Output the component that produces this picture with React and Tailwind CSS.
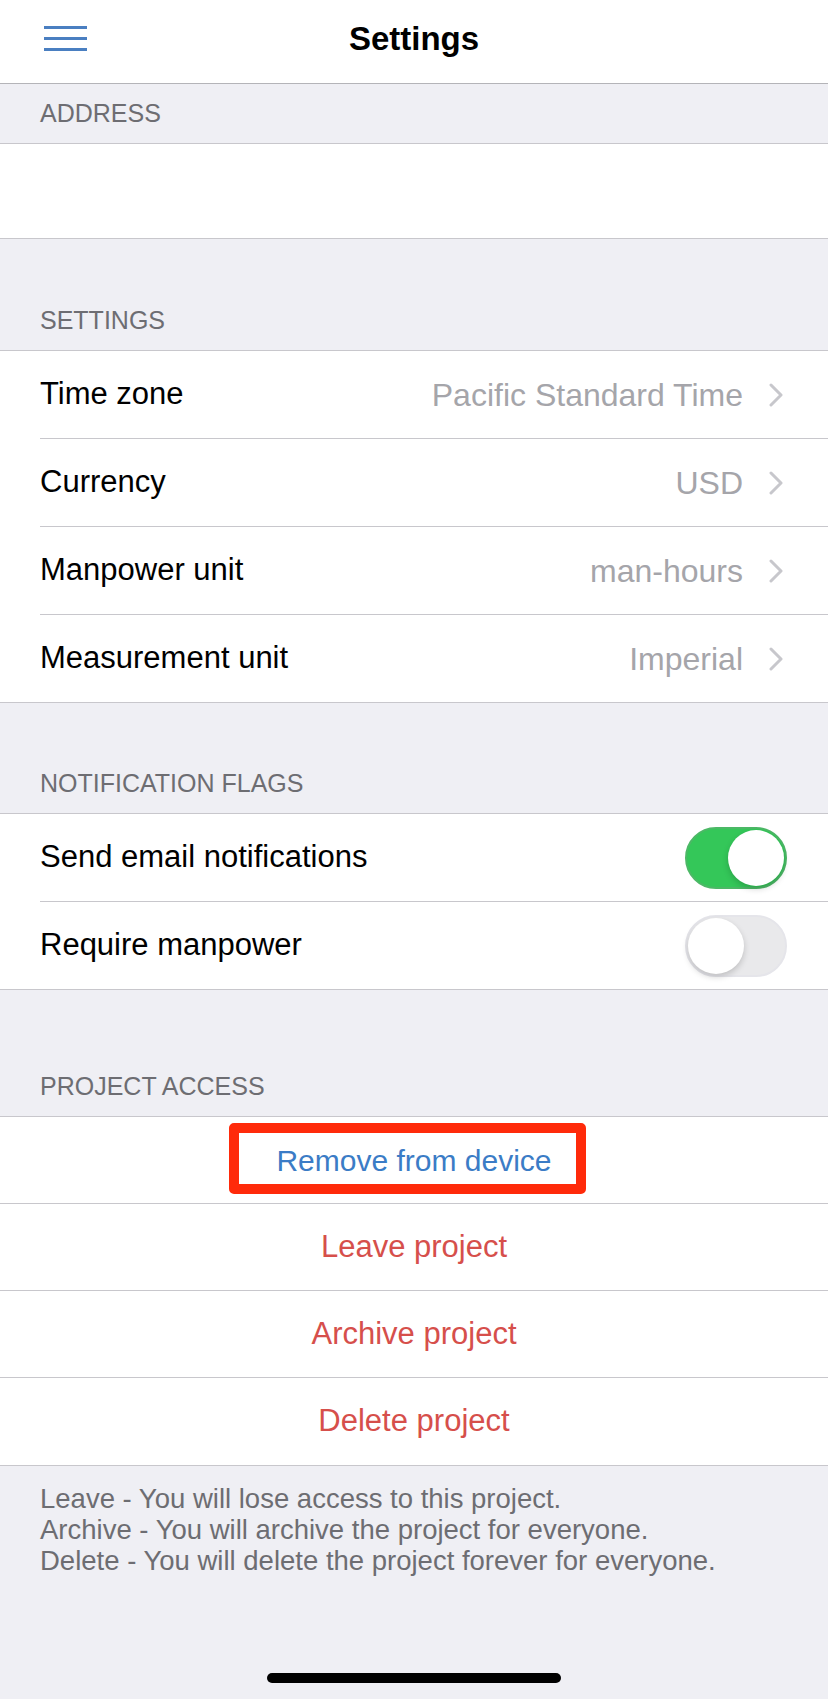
import { useState } from "react";

function Chevron() {
  return (
    <svg width="16" height="24" viewBox="0 0 16 24" fill="none" className="shrink-0">
      <polyline
        points="3,2 13,12 3,22"
        stroke="#c7c7cc"
        strokeWidth="3"
        strokeLinecap="round"
        strokeLinejoin="round"
      />
    </svg>
  );
}

function Toggle({ on, onChange }) {
  return (
    <button
      onClick={onChange}
      className={`relative w-[102px] h-[62px] rounded-full shrink-0 transition ${
        on ? "bg-[#34c759] border-2 border-[#4cb866]" : "bg-[#e9e9eb] border-2 border-[#e5e5ea]"
      }`}
    >
      <span
        className={`absolute top-[1px] w-[56px] h-[56px] rounded-full bg-white shadow-[0_3px_6px_rgba(0,0,0,0.18)] ${
          on ? "right-[1px]" : "left-[1px]"
        }`}
      />
    </button>
  );
}

function SectionHeader({ title, height }) {
  return (
    <div
      className={`${height} flex items-end px-[40px] pb-[15px] border-b border-[#c8c7cc] text-[25px] leading-[30px] text-[#6d6d72] uppercase`}
    >
      {title}
    </div>
  );
}

export default function App() {
  const [emailOn, setEmailOn] = useState(true);
  const [manpowerOn, setManpowerOn] = useState(false);

  const settingsRows = [
    { label: "Time zone", value: "Pacific Standard Time" },
    { label: "Currency", value: "USD" },
    { label: "Manpower unit", value: "man-hours" },
    { label: "Measurement unit", value: "Imperial" },
  ];

  const dangerRows = ["Leave project", "Archive project", "Delete project"];

  return (
    <div className="h-[1699px] flex flex-col bg-[#efeff4] font-['Liberation_Sans',Arial,sans-serif] text-black">
      {/* Nav bar */}
      <div className="h-[84px] shrink-0 relative flex items-center justify-center bg-white border-b border-[#b4b4b8]">
        <button className="absolute left-[44px] top-[26px] flex flex-col gap-[8px]">
          <span className="block w-[43px] h-[3px] bg-[#4a7fc1]" />
          <span className="block w-[43px] h-[3px] bg-[#4a7fc1]" />
          <span className="block w-[43px] h-[3px] bg-[#4a7fc1]" />
        </button>
        <h1 className="text-[33px] font-bold leading-none -mt-[6px]">Settings</h1>
      </div>

      {/* Address */}
      <SectionHeader title="Address" height="h-[60px]" />
      <div className="h-[95px] bg-white border-b border-[#c8c7cc]" />

      {/* Settings */}
      <SectionHeader title="Settings" height="h-[112px]" />
      <div className="bg-white border-b border-[#c8c7cc]">
        {settingsRows.map((row, i) => (
          <div key={row.label} className="pl-[40px]">
            <div
              className={`flex items-center pr-[44px] ${
                i < settingsRows.length - 1 ? "h-[88px] border-b border-[#c8c7cc]" : "h-[87px]"
              }`}
            >
              <span className="text-[31px] flex-1">{row.label}</span>
              <span className="text-[32px] text-[#a5a5aa] mr-[25px]">{row.value}</span>
              <Chevron />
            </div>
          </div>
        ))}
      </div>

      {/* Notification flags */}
      <SectionHeader title="Notification flags" height="h-[111px]" />
      <div className="bg-white border-b border-[#c8c7cc]">
        <div className="pl-[40px]">
          <div className="h-[88px] flex items-center pr-[41px] border-b border-[#c8c7cc]">
            <span className="text-[31px] flex-1">Send email notifications</span>
            <Toggle on={emailOn} onChange={() => setEmailOn(!emailOn)} />
          </div>
        </div>
        <div className="pl-[40px]">
          <div className="h-[87px] flex items-center pr-[41px]">
            <span className="text-[31px] flex-1">Require manpower</span>
            <Toggle on={manpowerOn} onChange={() => setManpowerOn(!manpowerOn)} />
          </div>
        </div>
      </div>

      {/* Project access */}
      <SectionHeader title="Project access" height="h-[127px]" />
      <div className="bg-white border-b border-[#c8c7cc]">
        <div className="relative h-[87px] flex items-center justify-center border-b border-[#c8c7cc]">
          <span className="text-[30px] text-[#3b7cc6]">Remove from device</span>
          {/* highlight box */}
          <div className="absolute left-[229px] top-[6px] w-[357px] h-[71px] border-[10px] border-[#ff2a0a] rounded-[5px]" />
        </div>
        {dangerRows.map((label, i) => (
          <div
            key={label}
            className={`h-[87px] flex items-center justify-center ${
              i < dangerRows.length - 1 ? "border-b border-[#c8c7cc]" : ""
            }`}
          >
            <span className="text-[31px] text-[#d64f4b]">{label}</span>
          </div>
        ))}
      </div>

      {/* Footer note */}
      <div className="flex-1 px-[40px] pt-[17px] text-[27.5px] leading-[31px] text-[#6d6d72]">
        <p>Leave - You will lose access to this project.</p>
        <p>Archive - You will archive the project for everyone.</p>
        <p>Delete - You will delete the project forever for everyone.</p>
      </div>

      {/* Home indicator */}
      <div className="flex justify-center pb-[16px] shrink-0">
        <div className="w-[294px] h-[10px] rounded-full bg-black" />
      </div>
    </div>
  );
}
